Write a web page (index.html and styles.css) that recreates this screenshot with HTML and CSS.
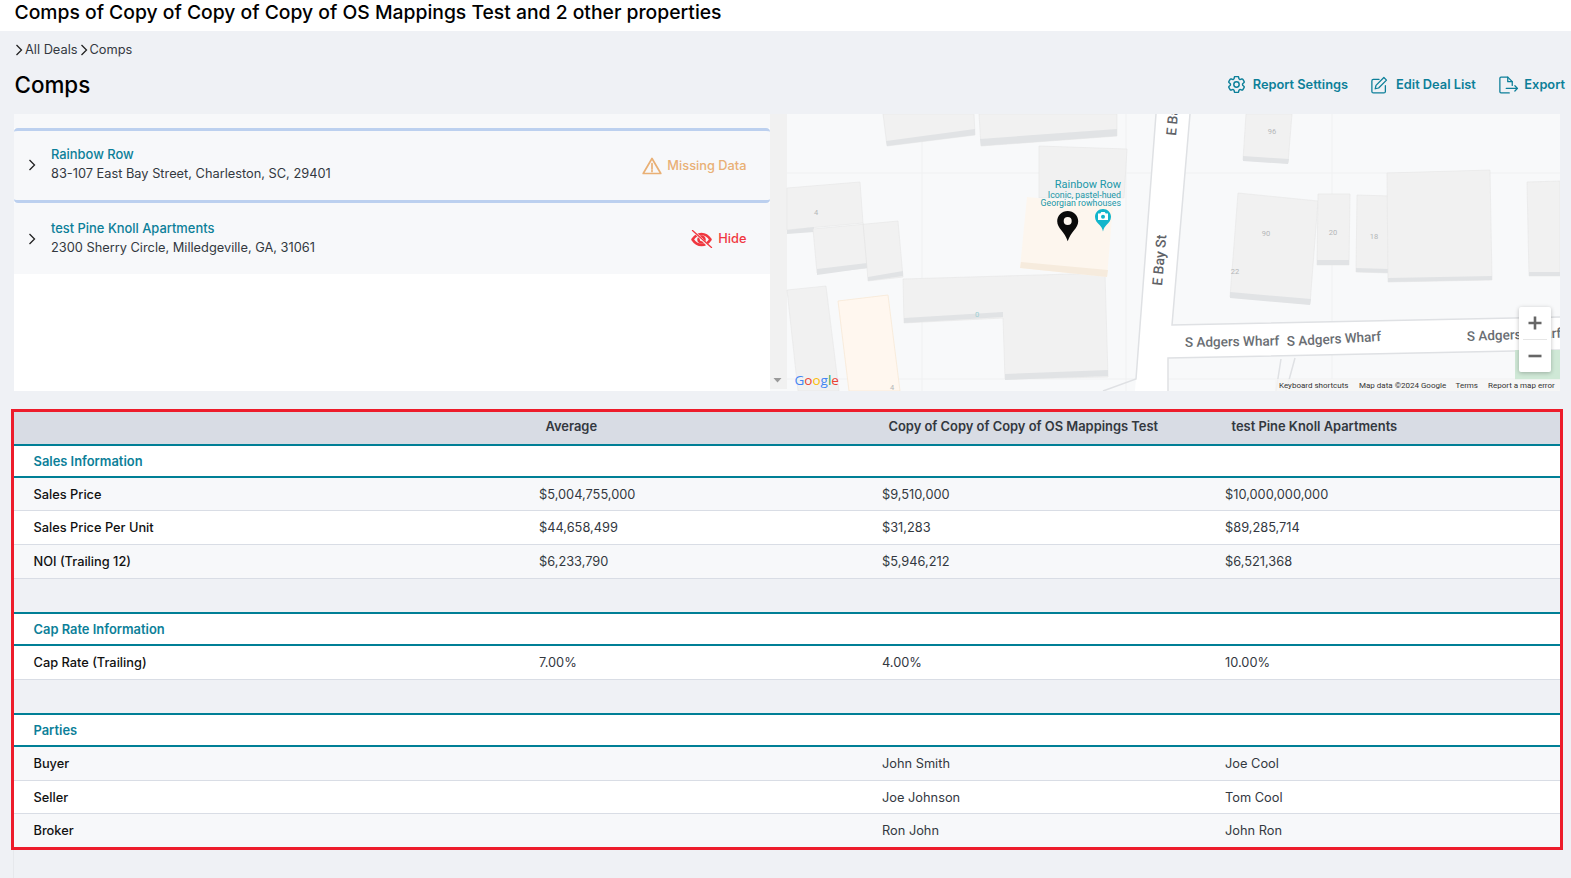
FILE: index.html
```html
<!DOCTYPE html>
<html lang="en">
<head>
<meta charset="utf-8">
<title>Comps</title>
<link rel="stylesheet" href="styles.css">
</head>
<body>
<header class="top-bar"><h1>Comps of Copy of Copy of Copy of OS Mappings Test and 2 other properties</h1></header>
<nav class="breadcrumb">
  <svg class="crumb-icon" viewBox="0 0 8 12"><path d="M1.5 1 L6.5 6 L1.5 11"/></svg><span>All Deals</span>
  <svg class="crumb-icon" viewBox="0 0 8 12"><path d="M1.5 1 L6.5 6 L1.5 11"/></svg><span>Comps</span>
</nav>
<div class="title-row">
  <h2>Comps</h2>
  <div class="actions">
    <a class="action action-gear">
      <svg class="action-icon gear-icon" viewBox="2.500 2.500 19 19"><path d="M9.594 3.940c.09-.542.56-.94 1.110-.94h2.593c.55 0 1.020.398 1.110.94l.213 1.281c.063.374.313.686.645.87.074.04.147.083.22.127.325.196.72.257 1.075.124l1.217-.456a1.125 1.125 0 0 1 1.370.49l1.296 2.247a1.125 1.125 0 0 1-.26 1.431l-1.003.827c-.293.241-.438.613-.43.992a7.723 7.723 0 0 1 0 .255c-.008.378.137.75.43.991l1.004.827c.424.35.534.955.26 1.430l-1.298 2.247a1.125 1.125 0 0 1-1.369.491l-1.217-.456c-.355-.133-.75-.072-1.076.124a6.470 6.470 0 0 1-.22.128c-.331.183-.581.495-.644.869l-.213 1.281c-.09.543-.56.94-1.110.94h-2.594c-.55 0-1.019-.398-1.110-.94l-.213-1.281c-.062-.374-.312-.686-.644-.87a6.520 6.520 0 0 1-.22-.127c-.325-.196-.72-.257-1.076-.124l-1.217.456a1.125 1.125 0 0 1-1.369-.49l-1.297-2.247a1.125 1.125 0 0 1 .26-1.431l1.004-.827c.292-.24.437-.613.43-.991a6.932 6.932 0 0 1 0-.255c.007-.38-.138-.751-.43-.992l-1.004-.827a1.125 1.125 0 0 1-.26-1.430l1.297-2.247a1.125 1.125 0 0 1 1.370-.491l1.216.456c.356.133.751.072 1.076-.124.072-.044.146-.086.22-.128.332-.183.582-.495.644-.869l.214-1.280Z"/><circle cx="12" cy="12" r="3"/></svg>
      <span>Report Settings</span>
    </a>
    <a class="action">
      <svg class="action-icon" viewBox="0 0 24 24"><path d="M12 4.500H4.500a2 2 0 0 0-2 2v14a2 2 0 0 0 2 2h14a2 2 0 0 0 2-2V13"/><path d="M18.500 2l3.500 3.500L11.500 16l-4.500 1 1-4.500z"/></svg>
      <span>Edit Deal List</span>
    </a>
    <a class="action action-export">
      <svg class="action-icon export-icon" viewBox="0 0 28 24"><path d="M15 22.500H4a1.500 1.500 0 0 1-1.500-1.500V3A1.500 1.500 0 0 1 4 1.500h9l6 6v5"/><path d="M13 1.500v6h6"/><path d="M11 16.500h15M22.500 13l3.500 3.500-3.500 3.500"/></svg>
      <span>Export</span>
    </a>
  </div>
</div>

<section class="overview">
  <div class="property-panel">
    <div class="panel-spacer"></div>
    <div class="property property-active">
      <svg class="chevron" viewBox="0 0 8 12"><path d="M1.500 1 L6.500 6 L1.500 11"/></svg>
      <div class="property-text">
        <div class="property-name">Rainbow Row</div>
        <div class="property-address">83-107 East Bay Street, Charleston, SC, 29401</div>
      </div>
      <div class="status status-warn">
        <svg class="status-icon" viewBox="0 0 20 18"><path d="M10 1.500 L18.800 16.500 H1.200 Z"/><path d="M10 6.500v5.500M10 13.600v1"/></svg>
        <span>Missing Data</span>
      </div>
    </div>
    <div class="property">
      <svg class="chevron" viewBox="0 0 8 12"><path d="M1.500 1 L6.500 6 L1.500 11"/></svg>
      <div class="property-text">
        <div class="property-name">test Pine Knoll Apartments</div>
        <div class="property-address">2300 Sherry Circle, Milledgeville, GA, 31061</div>
      </div>
      <div class="status status-hide">
        <svg class="status-icon hide-icon" viewBox="0 0 22 18"><path d="M2 9.500C4.500 5.800 7.500 4 11 4s6.500 1.800 9 5.500c-2.500 3.700-5.500 5.500-9 5.500s-6.500-1.800-9-5.500z"/><circle cx="11" cy="9.500" r="3"/><path class="slash-halo" d="M3 1 L20 18"/><path class="slash" d="M2 0.500 L21 17.500"/></svg>
        <span>Hide</span>
      </div>
    </div>
  </div>

  <div class="map">
    <svg class="map-canvas" viewBox="0 0 790 277">
      <rect class="m-ground" x="0" y="0" width="790" height="277"/>
      <rect class="m-strip" x="0" y="0" width="17" height="275"/>
      <path class="m-grid" d="M152 0V277M356 0V277M562 0V277M17 59H790M17 265H790"/>

      <polygon class="m-road" points="386,0 420,0 402,211 790,203 790,236 398,244 398,277 365,277"/>
      <path class="m-edge" d="M386 0 L366 265 L333 277M420 0 L402 211 L790 203M790 236 L398 244 V277"/>
      <path class="m-edge" d="M511 245 L506 277M525 244 L516 277"/>

      <polygon class="m-b" points="113,0 204,0 205,21 117,32"/>
      <polygon class="m-s" points="116,27 205,15 205,21 117,32"/>
      <polygon class="m-b" points="209,0 347,0 347,22 211,32"/>
      <polygon class="m-s" points="210,25 347,15 347,22 211,32"/>
      <polygon class="m-b" points="269,32 357,35 354,84 269,84"/>
      <polygon class="m-b" points="17,74 90,68 93,109 17,116"/>
      <polygon class="m-s" points="17,116 44,113 44,118 17,120"/>
      <polygon class="m-b" points="43,115 128,107 133,163 98,167 97,154 47,159"/>
      <polygon class="m-s" points="47,155 97,149 97,154 47,161"/>
      <polygon class="m-s" points="98,163 133,157 133,162 98,167"/>
      <path class="m-line" d="M93 109L97 154"/>
      <polygon class="m-b" points="17,176 56,172 69,277 28,277"/>
      <polygon class="m-p" points="68,187 118,181 130,277 79,277"/>
      <polygon class="m-b" points="133,165 335,159 338,263 235,265 233,204 134,209"/>
      <polygon class="m-s" points="134,204 233,198 233,203 134,209"/>
      <polygon class="m-s" points="235,260 338,256 338,262 235,266"/>
      <polygon class="m-b" points="476,0 522,0 518,49 473,46"/>
      <polygon class="m-s" points="473,42 519,45 518,50 473,47"/>
      <polygon class="m-b" points="468,79 548,87 540,190 460,183"/>
      <polygon class="m-s" points="460,178 541,185 540,191 460,184"/>
      <polygon class="m-b" points="548,80 580,80 579,151 547,151"/>
      <polygon class="m-s" points="547,146 579,146 579,151 547,151"/>
      <polygon class="m-b" points="587,81 620,82 619,159 586,158"/>
      <polygon class="m-s" points="586,154 619,155 619,159 586,158"/>
      <polygon class="m-b" points="617,59 720,56 722,166 618,168"/>
      <polygon class="m-s" points="618,164 722,162 722,166 618,168"/>
      <polygon class="m-b" points="757,68 790,67 790,162 759,162"/>
      <polygon class="m-s" points="759,158 790,158 790,162 759,162"/>
      <polygon class="m-p2" points="257,83 343,91 337,163 250,154"/>
      <polygon class="m-p3" points="251,148 338,156 337,163 250,154"/>
      <rect class="m-green" x="745" y="236" width="45" height="30"/>

      <text class="m-num" x="502" y="20">96</text>
      <text class="m-num" x="496" y="122">90</text>
      <text class="m-num" x="563" y="121">20</text>
      <text class="m-num" x="604" y="125">18</text>
      <text class="m-num" x="465" y="160">22</text>
      <text class="m-num m-num-teal" x="207" y="203">0</text>
      <text class="m-num" x="46" y="101">4</text>
      <text class="m-num" x="122" y="276">4</text>

      <text class="m-road-label" transform="translate(406 22) rotate(-85)">E Ba</text>
      <text class="m-road-label" transform="translate(392 172) rotate(-85)">E Bay St</text>
      <text class="m-street" transform="translate(415 233) rotate(-1)">S Adgers Wharf</text>
      <text class="m-street" transform="translate(517 232) rotate(-3)">S Adgers Wharf</text>
      <text class="m-street" transform="translate(697 227) rotate(-2)">S Adgers Wharf</text>

      <text class="m-poi m-poi-name" x="351" y="74">Rainbow Row</text>
      <text class="m-poi m-poi-sub" x="351" y="83.500">Iconic, pastel-hued</text>
      <text class="m-poi m-poi-sub" x="351" y="92">Georgian rowhouses</text>

      <path class="m-pin-teal" d="M333 95c-4.500 0-8 3.500-8 7.800 0 3.800 2.200 5.800 4.600 8.200 1.400 1.400 2.700 3.300 3.400 6.500.7-3.200 2-5.100 3.400-6.500 2.400-2.400 4.600-4.400 4.600-8.200 0-4.300-3.500-7.800-8-7.800z"/>
      <path class="m-cam" d="M328 99.500h2.300l1-1.400h3.400l1 1.400h2.300v6.500H328zM333 100.800a2 2 0 1 0 0 4 2 2 0 1 0 0-4z"/>
      <path class="m-pin" d="M297.700 97c-5.800 0-10.500 4.700-10.500 10.300 0 7 7.500 10.500 10.500 20 3-9.500 10.500-13 10.500-20C308.200 101.700 303.500 97 297.700 97zM297.700 103a4 4 0 1 1 0 8 4 4 0 1 1 0-8z"/>

      <path class="m-tri" d="M3.500 264h8l-4 4.500z"/>
      <text class="m-google" x="24.500" y="270.500"><tspan class="g-b">G</tspan><tspan class="g-r">o</tspan><tspan class="g-y">o</tspan><tspan class="g-b">g</tspan><tspan class="g-g">l</tspan><tspan class="g-r">e</tspan></text>

      <rect class="m-foot" x="505" y="265" width="285" height="12"/>
      <text class="m-legal" x="509" y="274">Keyboard shortcuts</text>
      <text class="m-legal" x="589" y="274">Map data ©2024 Google</text>
      <text class="m-legal" x="685.500" y="274">Terms</text>
      <text class="m-legal" x="718" y="274">Report a map error</text>
    </svg>
    <div class="zoom-control">
      <div class="zoom-btn"><svg viewBox="0 0 16 16"><path d="M8 1.500v13M1.500 8h13"/></svg></div>
      <div class="zoom-divider"></div>
      <div class="zoom-btn"><svg viewBox="0 0 16 16"><path d="M1.500 8h13"/></svg></div>
    </div>
  </div>
</section>

<section class="table-frame">
  <div class="row row-head"><div></div><div>Average</div><div>Copy of Copy of Copy of OS Mappings Test</div><div>test Pine Knoll Apartments</div></div>

  <div class="section-title">Sales Information</div>
  <div class="row row-data row-alt"><div class="label">Sales Price</div><div>$5,004,755,000</div><div>$9,510,000</div><div>$10,000,000,000</div></div>
  <div class="row row-data row-tall"><div class="label">Sales Price Per Unit</div><div>$44,658,499</div><div>$31,283</div><div>$89,285,714</div></div>
  <div class="row row-data row-alt row-tall"><div class="label">NOI (Trailing 12)</div><div>$6,233,790</div><div>$5,946,212</div><div>$6,521,368</div></div>
  <div class="spacer"></div>

  <div class="section-title">Cap Rate Information</div>
  <div class="row row-data row-tall"><div class="label">Cap Rate (Trailing)</div><div>7.00%</div><div>4.00%</div><div>10.00%</div></div>
  <div class="spacer"></div>

  <div class="section-title">Parties</div>
  <div class="row row-data row-alt row-tall"><div class="label">Buyer</div><div></div><div>John Smith</div><div>Joe Cool</div></div>
  <div class="row row-data"><div class="label">Seller</div><div></div><div>Joe Johnson</div><div>Tom Cool</div></div>
  <div class="row row-data row-alt row-last"><div class="label">Broker</div><div></div><div>Ron John</div><div>John Ron</div></div>
</section>
<div class="page-rail"></div>
</body>
</html>
```
FILE: styles.css
```css
* { box-sizing: border-box; }
html, body { height: 100%; }
body {
  margin: 0;
  overflow: hidden;
  background: #eff1f5;
  color: #1a1d21;
  font-family: Inter, "Liberation Sans", sans-serif;
  font-size: 12.8px;
}
h1, h2 { margin: 0; font-weight: 500; color: #000; }

.top-bar { height: 31px; background: #fff; padding-left: 14.5px; }
.top-bar h1 { font-size: 19.32px; line-height: 25px; }

.breadcrumb {
  display: flex; align-items: center; gap: 2px;
  height: 19px; margin-top: 9px; padding-left: 15px;
  color: #33383f; line-height: 19px;
}
.crumb-icon { width: 8px; height: 12px; fill: none; stroke: #222; stroke-width: 1.3; }

.title-row {
  display: flex; align-items: center; justify-content: space-between;
  height: 40px; margin-top: 6px; margin-bottom: 9px; padding: 0 6px 1px 14.5px;
}
.title-row h2 { font-size: 22.4px; }
.actions { display: flex; align-items: center; gap: 22px; }
.action { display: flex; align-items: center; gap: 8px; color: #0c7f99; font-weight: 600; }
.action-gear { gap: 8px; }
.action-export { gap: 5.5px; }
.action-icon { width: 18px; height: 18px; fill: none; stroke: #0c7f99; stroke-width: 1.7; stroke-linecap: round; stroke-linejoin: round; }
.gear-icon { width: 17px; height: 17px; stroke-width: 1.6; }
.export-icon { width: 21px; }

.overview { display: flex; height: 277px; margin-left: 14px; }
.property-panel { width: 756px; background: #fff; flex: none; }
.panel-spacer { height: 14px; background: #f7f8fa; }
.property {
  display: flex; align-items: center;
  height: 71px; padding: 0 23.5px 0 14px; background: #f7f8fa;
}
.property-active {
  height: 75px;
  border-top: 3px solid #bcd0ef; border-bottom: 3px solid #bcd0ef; border-radius: 4px;
}
.chevron { width: 8px; height: 12px; flex: none; margin-right: 15px; fill: none; stroke: #222; stroke-width: 1.3; }
.property-active .chevron { margin-bottom: 2px; }
.property-text { flex: 1; line-height: 18px; margin-bottom: 1px; }
.property-active .property-text { margin-bottom: 3px; }
.property-name { color: #0c7f99; font-weight: 500; font-size: 12.9px; }
.property-address { color: #33383f; margin-top: 1px; }
.status { display: flex; align-items: center; gap: 5px; font-weight: 500; }
.status-warn { color: #e9b075; }
.status-hide { color: #f0373f; }
.status-icon { width: 20px; height: 18px; fill: none; stroke: currentColor; stroke-width: 1.7; stroke-linejoin: round; stroke-linecap: round; }
.hide-icon { width: 23px; stroke-width: 2.6; }
.hide-icon .slash { stroke-width: 1.3; }
.hide-icon .slash-halo { stroke: #f7f8fa; stroke-width: 2.4; }

.map { position: relative; width: 790px; flex: none; overflow: hidden; }
.map-canvas { display: block; width: 790px; height: 277px; }
.m-strip { fill: #f1f1f1; }
.m-ground { fill: #f8f9fa; }
.m-grid { fill: none; stroke: #f0f1f2; stroke-width: 1; }
.m-road { fill: #fff; }
.m-edge { fill: none; stroke: #dfe1e4; stroke-width: 1.5; }
.m-b { fill: #f1f1f1; stroke: #e6e6e6; stroke-width: .6; }
.m-s { fill: #e1e3e5; }
.m-line { fill: none; stroke: #e4e4e4; stroke-width: .8; }
.m-p { fill: #fff7ef; stroke: #f8e8d6; stroke-width: .8; }
.m-p2 { fill: #fdf6ee; }
.m-p3 { fill: #f6ebdd; }
.m-green { fill: #cfe8d6; }
.m-num { font-family: Roboto, sans-serif; font-size: 7.5px; fill: #b4b6b8; text-anchor: middle; }
.m-num-teal { fill: #9fd0d4; }
.m-road-label { font-family: Roboto, sans-serif; font-size: 14px; font-weight: 500; fill: #5f6368; }
.m-street { font-family: Roboto, sans-serif; font-size: 13.5px; font-weight: 500; fill: #6a6e73; }
.m-poi { font-family: Roboto, sans-serif; fill: #2097a8; text-anchor: end; }
.m-poi-name { font-size: 11px; }
.m-poi-sub { font-size: 8.8px; }
.m-pin { fill: #0a0a0a; fill-rule: evenodd; }
.m-pin-teal { fill: #12b5cb; }
.m-cam { fill: #fff; fill-rule: evenodd; }
.m-tri { fill: #9a9a9a; }
.m-google { font-family: "Open Sans", sans-serif; font-size: 13.5px; font-weight: 500; }
.g-b { fill: #4285f4; }
.g-r { fill: #ea4335; }
.g-y { fill: #fbbc05; }
.g-g { fill: #34a853; }
.m-foot { fill: #f5f5f5; opacity: .8; }
.m-legal { font-family: Roboto, sans-serif; font-size: 8px; fill: #333; }

.zoom-control {
  position: absolute; top: 193px; left: 749px; width: 32px; height: 65px;
  background: #fff; border-radius: 2px; box-shadow: 0 1px 4px rgba(0,0,0,.25);
  display: flex; flex-direction: column; align-items: center;
}
.zoom-btn { flex: 1; display: flex; align-items: center; justify-content: center; }
.zoom-btn svg { width: 16px; height: 16px; fill: none; stroke: #666; stroke-width: 2.6; }
.zoom-divider { width: 24px; height: 1px; background: #e6e6e6; flex: none; }

.table-frame {
  width: 1552px; margin: 18px 0 0 11px;
  border: 3px solid #ed1c2b; background: #eff1f5;
}
.row { display: grid; grid-template-columns: 511px 343px 343px 1fr; align-items: center; }
.row > div { padding-left: 14px; }
.row > .label { padding-left: 19.5px; color: #111; font-weight: 500; }
.row-head {
  height: 34px; padding-bottom: 4px; background: #d8dce4; border-bottom: 2px solid #007f96;
  color: #33383f; font-weight: 600; font-size: 12.9px;
}
.row-head > div { padding-left: 20.5px; }
.section-title {
  display: flex; align-items: center; height: 32px; padding: 0 0 0 19.5px;
  background: #fff; border-bottom: 2px solid #007f96;
  color: #0c7f99; font-weight: 600; font-size: 12.9px;
}
.row-data { height: 33px; background: #fff; border-bottom: 1px solid #d9dde5; color: #33383f; }
.row-alt { background: #f7f8fa; }
.row-tall { height: 34px; }
.row-last { border-bottom: 0; }
.spacer { height: 35px; border-bottom: 2px solid #007f96; }
.page-rail { height: 40px; margin-left: 13px; border-left: 1px solid #e6e8ec; }
```
